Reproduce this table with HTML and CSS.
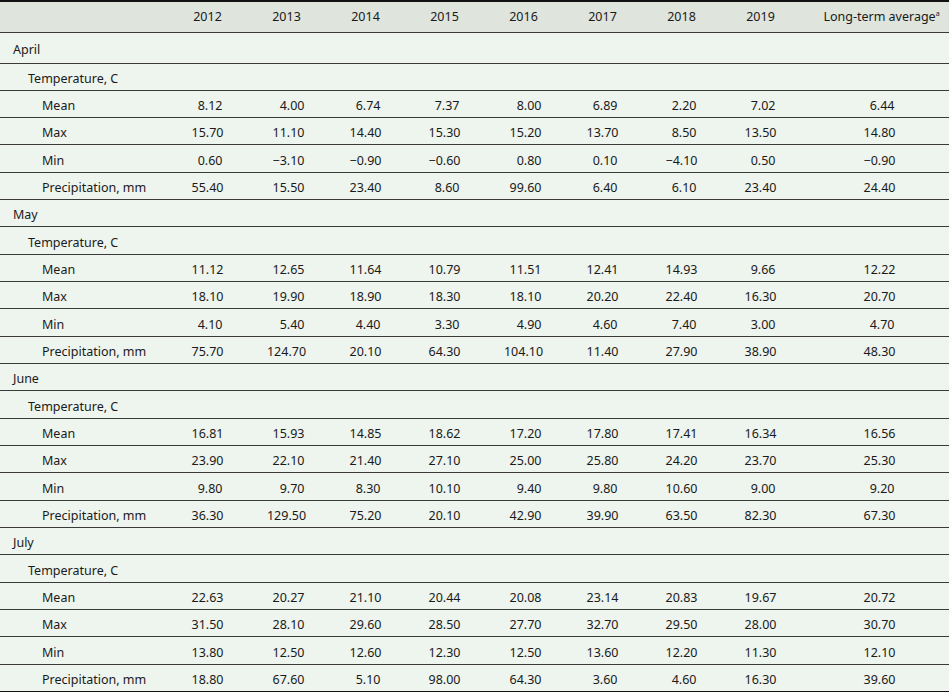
FILE: index.html
```html
<!DOCTYPE html>
<html>
<head>
<meta charset="utf-8">
<link rel="stylesheet" href="styles.css">
</head>
<body>
<table class="data">
<colgroup>
<col class="c-label"><col class="c-yr"><col class="c-yr"><col class="c-yr"><col class="c-yr"><col class="c-yr"><col class="c-yr"><col class="c-yr"><col class="c-yr"><col class="c-avg">
</colgroup>
<thead>
<tr><th></th><th>2012</th><th>2013</th><th>2014</th><th>2015</th><th>2016</th><th>2017</th><th>2018</th><th>2019</th><th class="avg">Long-term average<sup>a</sup></th></tr>
</thead>
<tbody>
<tr class="first"><td class="l0">April</td><td></td><td></td><td></td><td></td><td></td><td></td><td></td><td></td><td></td></tr>
<tr><td class="l1">Temperature, C</td><td></td><td></td><td></td><td></td><td></td><td></td><td></td><td></td><td></td></tr>
<tr><td class="l2">Mean</td><td><span class="n">8.12</span></td><td><span class="n">4.00</span></td><td><span class="n">6.74</span></td><td><span class="n">7.37</span></td><td><span class="n">8.00</span></td><td><span class="n">6.89</span></td><td><span class="n">2.20</span></td><td><span class="n">7.02</span></td><td><span class="n">6.44</span></td></tr>
<tr><td class="l2">Max</td><td><span class="n">15.70</span></td><td><span class="n">11.10</span></td><td><span class="n">14.40</span></td><td><span class="n">15.30</span></td><td><span class="n">15.20</span></td><td><span class="n">13.70</span></td><td><span class="n">8.50</span></td><td><span class="n">13.50</span></td><td><span class="n">14.80</span></td></tr>
<tr><td class="l2">Min</td><td><span class="n">0.60</span></td><td><span class="n">−3.10</span></td><td><span class="n">−0.90</span></td><td><span class="n">−0.60</span></td><td><span class="n">0.80</span></td><td><span class="n">0.10</span></td><td><span class="n">−4.10</span></td><td><span class="n">0.50</span></td><td><span class="n">−0.90</span></td></tr>
<tr><td class="l2">Precipitation, mm</td><td><span class="n">55.40</span></td><td><span class="n">15.50</span></td><td><span class="n">23.40</span></td><td><span class="n">8.60</span></td><td><span class="n">99.60</span></td><td><span class="n">6.40</span></td><td><span class="n">6.10</span></td><td><span class="n">23.40</span></td><td><span class="n">24.40</span></td></tr>
<tr><td class="l0">May</td><td></td><td></td><td></td><td></td><td></td><td></td><td></td><td></td><td></td></tr>
<tr><td class="l1">Temperature, C</td><td></td><td></td><td></td><td></td><td></td><td></td><td></td><td></td><td></td></tr>
<tr><td class="l2">Mean</td><td><span class="n">11.12</span></td><td><span class="n">12.65</span></td><td><span class="n">11.64</span></td><td><span class="n">10.79</span></td><td><span class="n">11.51</span></td><td><span class="n">12.41</span></td><td><span class="n">14.93</span></td><td><span class="n">9.66</span></td><td><span class="n">12.22</span></td></tr>
<tr><td class="l2">Max</td><td><span class="n">18.10</span></td><td><span class="n">19.90</span></td><td><span class="n">18.90</span></td><td><span class="n">18.30</span></td><td><span class="n">18.10</span></td><td><span class="n">20.20</span></td><td><span class="n">22.40</span></td><td><span class="n">16.30</span></td><td><span class="n">20.70</span></td></tr>
<tr><td class="l2">Min</td><td><span class="n">4.10</span></td><td><span class="n">5.40</span></td><td><span class="n">4.40</span></td><td><span class="n">3.30</span></td><td><span class="n">4.90</span></td><td><span class="n">4.60</span></td><td><span class="n">7.40</span></td><td><span class="n">3.00</span></td><td><span class="n">4.70</span></td></tr>
<tr><td class="l2">Precipitation, mm</td><td><span class="n">75.70</span></td><td><span class="n">124.70</span></td><td><span class="n">20.10</span></td><td><span class="n">64.30</span></td><td><span class="n">104.10</span></td><td><span class="n">11.40</span></td><td><span class="n">27.90</span></td><td><span class="n">38.90</span></td><td><span class="n">48.30</span></td></tr>
<tr><td class="l0">June</td><td></td><td></td><td></td><td></td><td></td><td></td><td></td><td></td><td></td></tr>
<tr><td class="l1">Temperature, C</td><td></td><td></td><td></td><td></td><td></td><td></td><td></td><td></td><td></td></tr>
<tr><td class="l2">Mean</td><td><span class="n">16.81</span></td><td><span class="n">15.93</span></td><td><span class="n">14.85</span></td><td><span class="n">18.62</span></td><td><span class="n">17.20</span></td><td><span class="n">17.80</span></td><td><span class="n">17.41</span></td><td><span class="n">16.34</span></td><td><span class="n">16.56</span></td></tr>
<tr><td class="l2">Max</td><td><span class="n">23.90</span></td><td><span class="n">22.10</span></td><td><span class="n">21.40</span></td><td><span class="n">27.10</span></td><td><span class="n">25.00</span></td><td><span class="n">25.80</span></td><td><span class="n">24.20</span></td><td><span class="n">23.70</span></td><td><span class="n">25.30</span></td></tr>
<tr><td class="l2">Min</td><td><span class="n">9.80</span></td><td><span class="n">9.70</span></td><td><span class="n">8.30</span></td><td><span class="n">10.10</span></td><td><span class="n">9.40</span></td><td><span class="n">9.80</span></td><td><span class="n">10.60</span></td><td><span class="n">9.00</span></td><td><span class="n">9.20</span></td></tr>
<tr><td class="l2">Precipitation, mm</td><td><span class="n">36.30</span></td><td><span class="n">129.50</span></td><td><span class="n">75.20</span></td><td><span class="n">20.10</span></td><td><span class="n">42.90</span></td><td><span class="n">39.90</span></td><td><span class="n">63.50</span></td><td><span class="n">82.30</span></td><td><span class="n">67.30</span></td></tr>
<tr><td class="l0">July</td><td></td><td></td><td></td><td></td><td></td><td></td><td></td><td></td><td></td></tr>
<tr><td class="l1">Temperature, C</td><td></td><td></td><td></td><td></td><td></td><td></td><td></td><td></td><td></td></tr>
<tr><td class="l2">Mean</td><td><span class="n">22.63</span></td><td><span class="n">20.27</span></td><td><span class="n">21.10</span></td><td><span class="n">20.44</span></td><td><span class="n">20.08</span></td><td><span class="n">23.14</span></td><td><span class="n">20.83</span></td><td><span class="n">19.67</span></td><td><span class="n">20.72</span></td></tr>
<tr><td class="l2">Max</td><td><span class="n">31.50</span></td><td><span class="n">28.10</span></td><td><span class="n">29.60</span></td><td><span class="n">28.50</span></td><td><span class="n">27.70</span></td><td><span class="n">32.70</span></td><td><span class="n">29.50</span></td><td><span class="n">28.00</span></td><td><span class="n">30.70</span></td></tr>
<tr><td class="l2">Min</td><td><span class="n">13.80</span></td><td><span class="n">12.50</span></td><td><span class="n">12.60</span></td><td><span class="n">12.30</span></td><td><span class="n">12.50</span></td><td><span class="n">13.60</span></td><td><span class="n">12.20</span></td><td><span class="n">11.30</span></td><td><span class="n">12.10</span></td></tr>
<tr><td class="l2">Precipitation, mm</td><td><span class="n">18.80</span></td><td><span class="n">67.60</span></td><td><span class="n">5.10</span></td><td><span class="n">98.00</span></td><td><span class="n">64.30</span></td><td><span class="n">3.60</span></td><td><span class="n">4.60</span></td><td><span class="n">16.30</span></td><td><span class="n">39.60</span></td></tr>
</tbody>
</table>
</body>
</html>
```

FILE: styles.css
```css
html, body {
  margin: 0;
  padding: 0;
  background: #eef4ee;
}
body {
  font-family: "Noto Sans", "Liberation Sans", sans-serif;
  font-size: 12.5px;
  color: #1a1a1a;
}
.data {
  width: 949px;
  table-layout: fixed;
  border-collapse: collapse;
  border-top: 2px solid #111;
}
.c-label { width: 168px; }
.c-yr { width: 79px; }
.c-avg { width: 149px; }
thead tr {
  background: #dfe5dd;
  height: 31px;
}
th {
  font-weight: normal;
  text-align: center;
  padding: 0;
  vertical-align: middle;
  border-bottom: 1px solid #3a3a3a;
}
th.avg { padding-left: 14px; }
sup {
  font-size: 7px;
  vertical-align: 5px;
  line-height: 0;
}
tbody tr { height: 27.33px; }
tbody tr.first { height: 31px; }
td {
  padding: 3px 0 0 0;
  text-align: center;
  vertical-align: middle;
  border-bottom: 1px solid #3a3a3a;
  white-space: nowrap;
}
td:last-child { padding-left: 10px; }
td.l0 { text-align: left; padding-left: 13px; }
td.l1 { text-align: left; padding-left: 28px; }
td.l2 { text-align: left; padding-left: 42px; }
tbody tr:last-child td { border-bottom: 2px solid #111; }
.n {
  display: inline-block;
  min-width: 30px;
  text-align: right;
}
td:nth-child(3) .n, td:nth-child(6) .n { min-width: 36px; }
```
